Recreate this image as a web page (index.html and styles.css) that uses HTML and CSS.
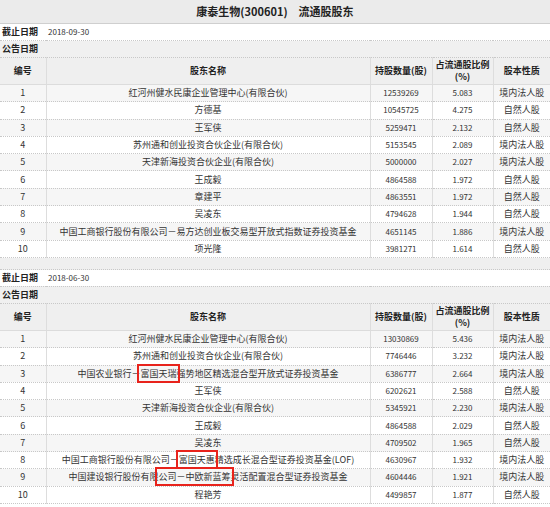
FILE: index.html
```html
<!DOCTYPE html>
<html lang="zh-CN">
<head>
<meta charset="utf-8">
<title>康泰生物(300601) 流通股股东</title>
<link rel="stylesheet" href="styles.css">
</head>
<body>
<div class="page">
  <div class="title">康泰生物(300601)　流通股股东</div>

  <table class="holders">
    <colgroup><col class="c-no"><col class="c-name"><col class="c-qty"><col class="c-pct"><col class="c-type"></colgroup>
    <tr class="meta"><th class="label">截止日期</th><td colspan="4" class="value">2018-09-30</td></tr>
    <tr class="meta shade"><th class="label">公告日期</th><td colspan="4" class="value"></td></tr>
    <tr class="head"><th>编号</th><th>股东名称</th><th>持股数量(股)</th><th><span class="two">占流通股比例</span><span class="two">(%)</span></th><th>股本性质</th></tr>
    <tr><td>1</td><td>红河州健水民康企业管理中心(有限合伙)</td><td class="num">12539269</td><td class="num">5.083</td><td>境内法人股</td></tr>
    <tr><td>2</td><td>方德基</td><td class="num">10545725</td><td class="num">4.275</td><td>自然人股</td></tr>
    <tr><td>3</td><td>王军侠</td><td class="num">5259471</td><td class="num">2.132</td><td>自然人股</td></tr>
    <tr><td>4</td><td>苏州通和创业投资合伙企业(有限合伙)</td><td class="num">5153545</td><td class="num">2.089</td><td>境内法人股</td></tr>
    <tr><td>5</td><td>天津新海投资合伙企业(有限合伙)</td><td class="num">5000000</td><td class="num">2.027</td><td>境内法人股</td></tr>
    <tr><td>6</td><td>王成毅</td><td class="num">4864588</td><td class="num">1.972</td><td>自然人股</td></tr>
    <tr><td>7</td><td>章建平</td><td class="num">4863551</td><td class="num">1.972</td><td>自然人股</td></tr>
    <tr><td>8</td><td>吴凌东</td><td class="num">4794628</td><td class="num">1.944</td><td>自然人股</td></tr>
    <tr><td>9</td><td>中国工商银行股份有限公司－易方达创业板交易型开放式指数证券投资基金</td><td class="num">4651145</td><td class="num">1.886</td><td>境内法人股</td></tr>
    <tr><td>10</td><td>项光隆</td><td class="num">3981271</td><td class="num">1.614</td><td>自然人股</td></tr>
  </table>

  <div class="gap"></div>

  <table class="holders">
    <colgroup><col class="c-no"><col class="c-name"><col class="c-qty"><col class="c-pct"><col class="c-type"></colgroup>
    <tr class="meta"><th class="label">截止日期</th><td colspan="4" class="value">2018-06-30</td></tr>
    <tr class="meta shade"><th class="label">公告日期</th><td colspan="4" class="value"></td></tr>
    <tr class="head"><th>编号</th><th>股东名称</th><th>持股数量(股)</th><th><span class="two">占流通股比例</span><span class="two">(%)</span></th><th>股本性质</th></tr>
    <tr><td>1</td><td>红河州健水民康企业管理中心(有限合伙)</td><td class="num">13030869</td><td class="num">5.436</td><td>境内法人股</td></tr>
    <tr><td>2</td><td>苏州通和创业投资合伙企业(有限合伙)</td><td class="num">7746446</td><td class="num">3.232</td><td>境内法人股</td></tr>
    <tr><td>3</td><td>中国农业银行－<span class="mark">富国天瑞</span>强势地区精选混合型开放式证券投资基金</td><td class="num">6386777</td><td class="num">2.664</td><td>境内法人股</td></tr>
    <tr><td>4</td><td>王军侠</td><td class="num">6202621</td><td class="num">2.588</td><td>自然人股</td></tr>
    <tr><td>5</td><td>天津新海投资合伙企业(有限合伙)</td><td class="num">5345921</td><td class="num">2.230</td><td>境内法人股</td></tr>
    <tr><td>6</td><td>王成毅</td><td class="num">4864588</td><td class="num">2.029</td><td>自然人股</td></tr>
    <tr><td>7</td><td>吴凌东</td><td class="num">4709502</td><td class="num">1.965</td><td>自然人股</td></tr>
    <tr><td>8</td><td>中国工商银行股份有限公司－<span class="mark">富国天惠</span>精选成长混合型证券投资基金(LOF)</td><td class="num">4630967</td><td class="num">1.932</td><td>境内法人股</td></tr>
    <tr><td>9</td><td>中国建设银行股份有限<span class="mark">公司－中欧新蓝筹</span>灵活配置混合型证券投资基金</td><td class="num">4604446</td><td class="num">1.921</td><td>境内法人股</td></tr>
    <tr><td>10</td><td>程艳芳</td><td class="num">4499857</td><td class="num">1.877</td><td>自然人股</td></tr>
  </table>
</div>
</body>
</html>
```

FILE: styles.css
```css
html, body {
  margin: 0;
  padding: 0;
  background: #ffffff;
}

.page {
  width: 550px;
  font-family: "Noto Sans CJK SC", "Noto Sans", sans-serif;
  color: #333333;
  font-size: 9px;
}

.title {
  height: 23px;
  line-height: 23px;
  background: #ebebeb;
  border-bottom: 1px solid #cfcfcf;
  text-align: center;
  font-size: 11px;
  font-weight: bold;
  color: #222222;
}

.holders {
  width: 550px;
  table-layout: fixed;
  border-collapse: collapse;
}

.c-no { width: 46px; }
.c-name { width: 324px; }
.c-qty { width: 62px; }
.c-pct { width: 61px; }
.c-type { width: 57px; }

.holders td,
.holders th {
  padding: 0;
  height: 16.3px;
  line-height: 12px;
  text-align: center;
  white-space: nowrap;
  overflow: visible;
  border-bottom: 1px dotted #c8c8c8;
  border-left: 1px solid #dddddd;
}

.holders td:first-child,
.holders th:first-child {
  border-left: none;
}

.holders tr:nth-child(even) td {
  background: #f6f6f6;
}

.holders tr.meta td,
.holders tr.meta th {
  border-left: none;
  height: 16px;
  background: #ffffff;
}

.holders tr.meta.shade td,
.holders tr.meta.shade th {
  background: #f0f0f0;
}

.holders th.label {
  text-align: left;
  padding-left: 2px;
  font-weight: bold;
  color: #222222;
  font-size: 9px;
}

.holders td.value {
  text-align: left;
  padding-left: 2px;
  font-size: 8px;
}

.holders tr.head th {
  height: 26px;
  background: #efefef;
  font-weight: bold;
  color: #222222;
  line-height: 12px;
  border-bottom: 1px solid #dcdcdc;
}

.two {
  display: block;
  line-height: 12px;
}

.holders td.num {
  font-size: 8px;
}

.gap {
  height: 11px;
  background: #efefef;
  border-bottom: 1px dotted #c8c8c8;
}

.mark {
  outline: 2px solid #e8231c;
  outline-offset: 1px;
}
```
